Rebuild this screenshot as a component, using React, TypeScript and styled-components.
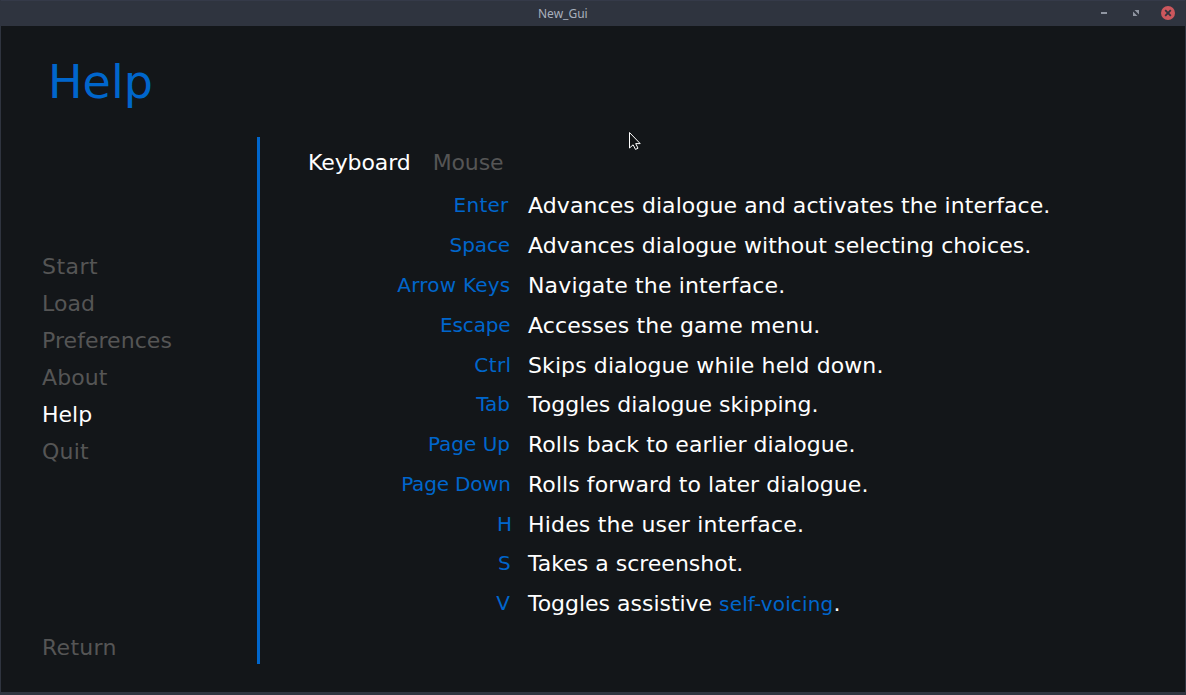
import React from 'react';
import styled, { createGlobalStyle } from 'styled-components';

const GlobalStyle = createGlobalStyle`
  * { box-sizing: border-box; }
  body { margin: 0; background: #131619; }
`;

const Window = styled.div`
  position: relative;
  display: flex;
  flex-direction: column;
  width: 1186px;
  height: 695px;
  overflow: hidden;
  background: #131619;
  border: solid #2f343f;
  border-width: 0 1px 3px;
  font-family: 'DejaVu Sans', sans-serif;
  font-size: 22px;
  color: #ffffff;
`;

const TitleBar = styled.header`
  display: grid;
  grid-template-columns: 538px 1fr auto;
  height: 26px;
  margin: 0 -1px;
  padding-right: 10px;
  background: #2f343f;
  border-top: 1px solid #353a49;
  flex: none;
`;

const WindowTitle = styled.div`
  grid-column: 2;
  font: 12px/25px 'Noto Sans', sans-serif;
  color: #a9b0bd;
  white-space: nowrap;
`;

const Controls = styled.div`
  display: flex;
`;

const Title = styled.h1`
  margin: 28px 0 0 47px;
  height: 83px;
  font-size: 46px;
  font-weight: 400;
  line-height: 56px;
  color: #0066cc;
  flex: none;
`;

const Body = styled.div`
  display: flex;
  height: 527px;
`;

const Sidebar = styled.nav`
  display: flex;
  flex-direction: column;
  width: 259px;
  padding: 111px 0 0 41px;
  border-right: 3px solid #0066cc;
`;

const Item = styled.a<{ $active?: boolean; $last?: boolean; $track?: number }>`
  height: 37px;
  line-height: 37px;
  margin-top: ${p => (p.$last ? 159 : 0)}px;
  letter-spacing: ${p => p.$track ?? 0}px;
  white-space: nowrap;
  color: ${p => (p.$active ? '#ffffff' : '#555555')};
`;

const Content = styled.main`
  padding: 7px 0 0 48px;
`;

const Tabs = styled.div`
  display: flex;
  gap: 22px;
  height: 41px;
`;

const Row = styled.div<{ $h: number }>`
  display: grid;
  grid-template-columns: 204px auto;
  column-gap: 16px;
  height: ${p => p.$h}px;
  line-height: 40px;
  white-space: nowrap;
`;

const Key = styled.span<{ $track: number; $inset: number }>`
  padding-right: ${p => p.$inset}px;
  text-align: right;
  font-size: 20px;
  letter-spacing: ${p => p.$track}px;
  color: #0066cc;
`;

const Text = styled.span<{ $track: number }>`
  line-height: 42px;
  letter-spacing: ${p => p.$track}px;
`;

const Link = styled.a`
  font-size: 20px;
  letter-spacing: 0.15px;
  color: #0066cc;
`;

const Pointer = styled.svg`
  position: absolute;
  left: 625px;
  top: 131px;
`;

const menu = [
  { label: 'Start', track: 0.45 },
  { label: 'Load', track: 0.05 },
  { label: 'Preferences', track: 0.05 },
  { label: 'About', track: 0.1 },
  { label: 'Help', track: 0 },
  { label: 'Quit', track: 0.2 },
  { label: 'Return', track: 0.3 },
];

// kt / tt: tracking of the key and its description; inset: space right of the key
const rows: { k: string; t: React.ReactNode; h: number; kt: number; inset: number; tt: number }[] = [
  { k: 'Enter', t: 'Advances dialogue and activates the interface.', h: 40, kt: 0.25, inset: 3.5, tt: 0.08 },
  { k: 'Space', t: 'Advances dialogue without selecting choices.', h: 40, kt: -0.1, inset: 2, tt: 0.065 },
  { k: 'Arrow Keys', t: 'Navigate the interface.', h: 40, kt: 0.22, inset: 1.5, tt: 0.15 },
  { k: 'Escape', t: 'Accesses the game menu.', h: 40, kt: -0.15, inset: 1.5, tt: 0.12 },
  { k: 'Ctrl', t: 'Skips dialogue while held down.', h: 39, kt: 0.4, inset: 0.5, tt: 0.1 },
  { k: 'Tab', t: 'Toggles dialogue skipping.', h: 40, kt: 0, inset: 2, tt: 0.02 },
  { k: 'Page Up', t: 'Rolls back to earlier dialogue.', h: 40, kt: 0, inset: 2, tt: 0.04 },
  { k: 'Page Down', t: 'Rolls forward to later dialogue.', h: 40, kt: -0.2, inset: 1.2, tt: 0.07 },
  { k: 'H', t: 'Hides the user interface.', h: 39, kt: 0, inset: 0, tt: 0.17 },
  { k: 'S', t: 'Takes a screenshot.', h: 40, kt: 0, inset: 1.3, tt: 0 },
  { k: 'V', t: <>Toggles assistive <Link>self-voicing</Link>.</>, h: 40, kt: 0, inset: 2, tt: -0.02 },
];

export default function App() {
  return (
    <Window>
      <GlobalStyle />
      <TitleBar>
        <WindowTitle>New_Gui</WindowTitle>
        <Controls>
          <svg width="80" height="24" viewBox="1096 1 80 24">
            <rect x="1101" y="12" width="6" height="2" fill="#9096a2" />
            <path d="M1134.500 10h4.500v4.500zM1133 11.500v4.500h4.500z" fill="#9096a2" />
            <circle cx="1168" cy="13" r="7" fill="#cc575d" />
            <path d="M1165.200 10.200l5.600 5.600M1170.800 10.200l-5.600 5.600" stroke="#2f343f" strokeWidth="1.800" />
          </svg>
        </Controls>
      </TitleBar>
      <Title>Help</Title>
      <Body>
        <Sidebar>
          {menu.map(m => (
            <Item key={m.label} $active={m.label === 'Help'} $last={m.label === 'Return'} $track={m.track}>
              {m.label}
            </Item>
          ))}
        </Sidebar>
        <Content>
          <Tabs>
            <Item $active $track={-0.1}>Keyboard</Item>
            <Item $track={-0.1}>Mouse</Item>
          </Tabs>
          {rows.map(r => (
            <Row key={r.k} $h={r.h}>
              <Key $track={r.kt} $inset={r.inset}>{r.k}</Key>
              <Text $track={r.tt}>{r.t}</Text>
            </Row>
          ))}
        </Content>
      </Body>
      <Pointer width="16" height="22" viewBox="0 0 16 22">
        <path d="M3.500 1.500v15.500l3.600-3.200 2.400 4.600 2.500-1.200-2.300-4.600h4.500z" fill="#111315" stroke="#ffffff" strokeWidth="1" />
      </Pointer>
    </Window>
  );
}
